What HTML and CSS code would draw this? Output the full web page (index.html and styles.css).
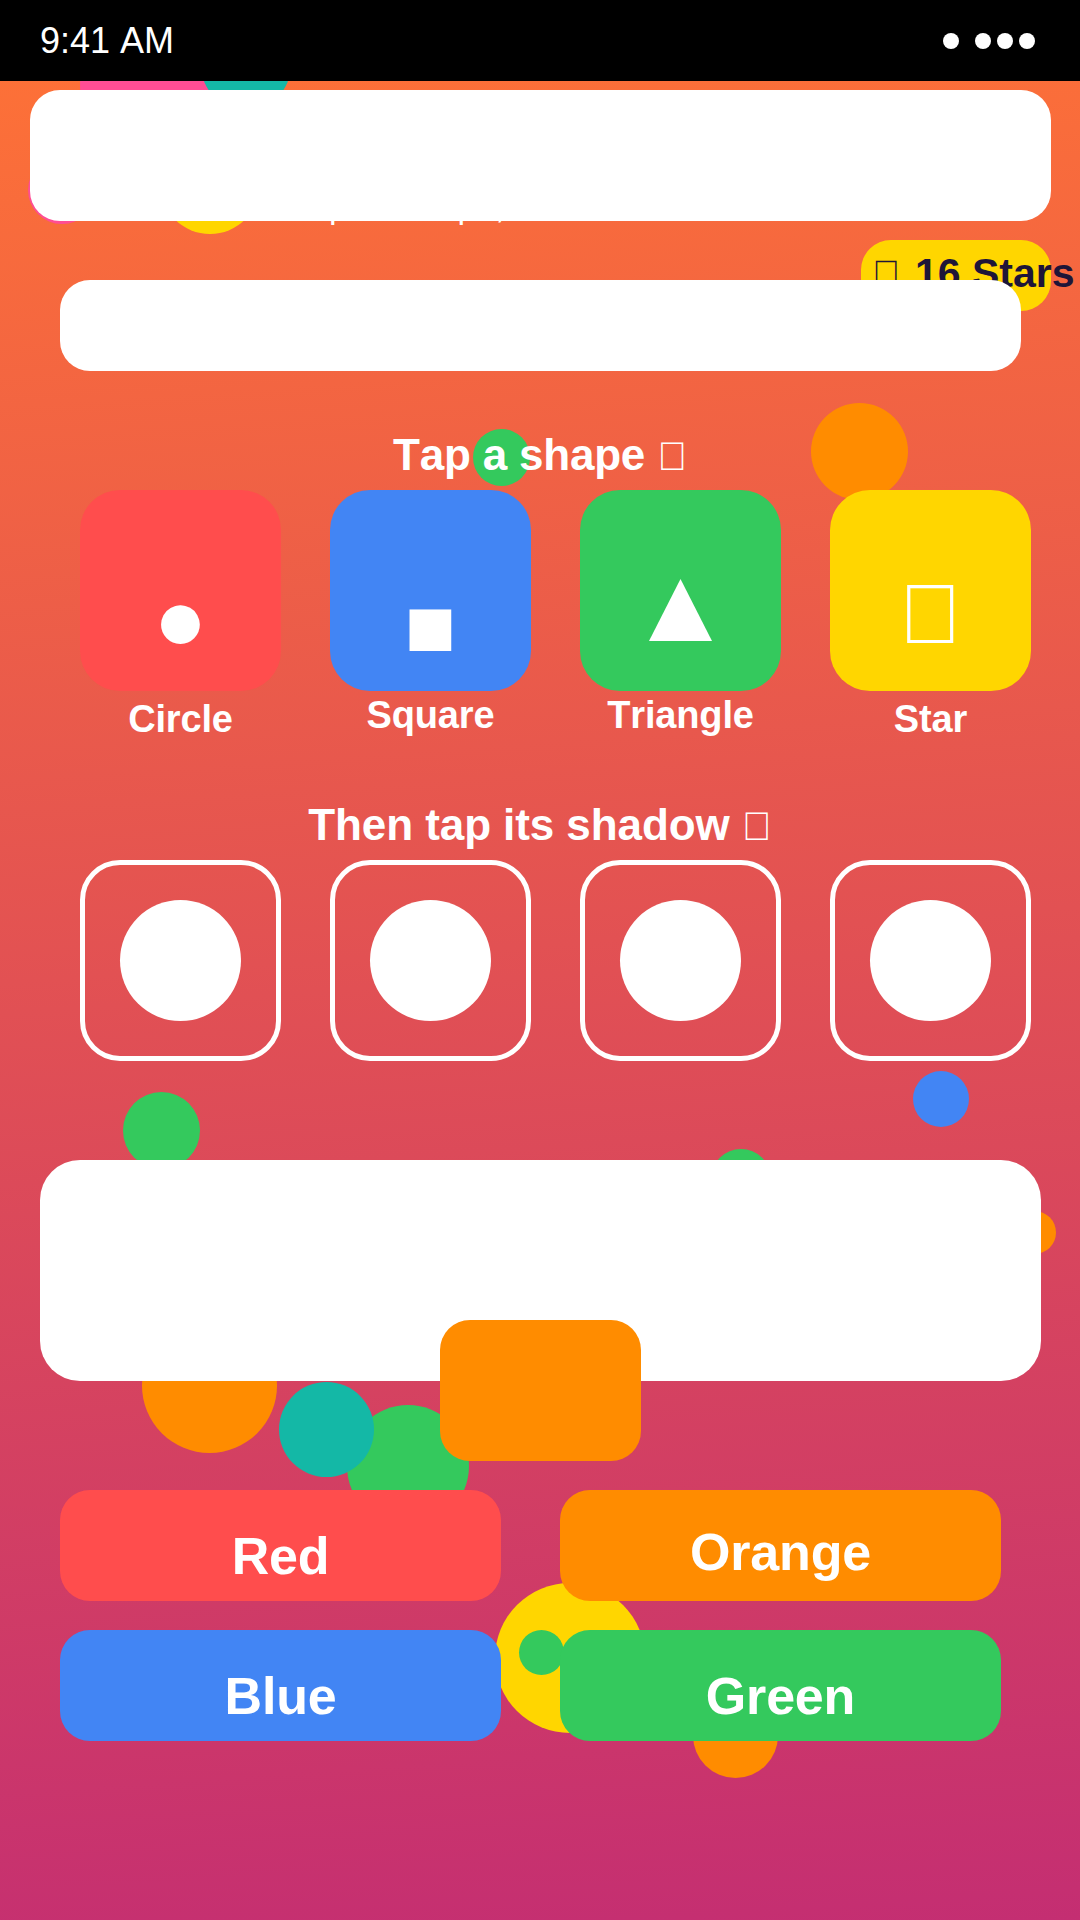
FILE: index.html
```html
<!DOCTYPE html>
<html lang="en">
<head>
<meta charset="utf-8">
<title>Shapes and Shadows</title>
<link rel="stylesheet" href="styles.css">
</head>
<body>
<div class="bubbles">
  <span class="bubble pink b1"></span>
  <span class="bubble pink b2"></span>
  <span class="bubble teal b3"></span>
  <span class="bubble yellow b4"></span>
  <span class="bubble green b5"></span>
  <span class="bubble orange b6"></span>
  <span class="bubble green b7"></span>
  <span class="bubble blue b8"></span>
  <span class="bubble green b9"></span>
  <span class="bubble orange b10"></span>
  <span class="bubble orange b11"></span>
  <span class="bubble green b12"></span>
  <span class="bubble teal b13"></span>
  <span class="bubble yellow b14"></span>
  <span class="bubble orange b15"></span>
  <span class="bubble green b16"></span>
</div>
<header class="status">
  <span class="time">9:41 AM</span>
  <span class="signal">
    <i class="dot dot-first"></i><i class="dot"></i><i class="dot"></i><i class="dot"></i>
  </span>
</header>
<main class="screen">
  <p class="subtitle">plan shape,</p>
  <div class="card card-title"></div>
  <div class="stars"><span class="tofu tofu-pill">&#xE000;</span> 16 Stars</div>
  <div class="card card-bar"></div>
  <h2 class="heading">Tap a shape <span class="tofu">&#xE000;</span></h2>
  <div class="shape-row">
    <div class="shape-col">
      <div class="tile red"><span class="glyph g-circle">●</span></div>
      <div class="label label-low">Circle</div>
    </div>
    <div class="shape-col">
      <div class="tile blue"><span class="glyph g-square">■</span></div>
      <div class="label">Square</div>
    </div>
    <div class="shape-col">
      <div class="tile green">
        <svg class="g-triangle" width="63" height="62" viewBox="0 0 63 62"><polygon points="31.5,0 63,62 0,62" fill="#fff"/></svg>
      </div>
      <div class="label">Triangle</div>
    </div>
    <div class="shape-col">
      <div class="tile yellow"><span class="glyph g-star">&#xE000;</span></div>
      <div class="label label-low">Star</div>
    </div>
  </div>
  <h2 class="heading heading-second">Then tap its shadow <span class="tofu">&#xE000;</span></h2>
  <div class="shadow-row">
    <div class="shadow"><span class="disc"></span></div>
    <div class="shadow"><span class="disc"></span></div>
    <div class="shadow"><span class="disc"></span></div>
    <div class="shadow"><span class="disc"></span></div>
  </div>
  <div class="card card-big"></div>
  <div class="swatch"></div>
  <div class="answers">
    <button class="answer red a-red">Red</button>
    <button class="answer orange a-orange">Orange</button>
    <button class="answer blue a-blue">Blue</button>
    <button class="answer green a-green">Green</button>
  </div>
</main>
</body>
</html>
```
FILE: styles.css
```css
* { box-sizing: border-box; }
html, body { margin: 0; padding: 0; }
body {
  position: relative;
  width: 1080px;
  height: 1920px;
  overflow: hidden;
  font-family: "Liberation Sans", Arial, sans-serif;
  font-kerning: none;
  color: #fff;
  background: linear-gradient(176deg, #ff7335 0%, #c42e72 100%);
}
.red { background: #ff4d4d; }
.blue { background: #4285f4; }
.green { background: #34c95d; }
.yellow { background: #ffd600; }
.orange { background: #ff8c00; }
.teal { background: #14b8a6; }
.pink { background: #ff4d94; }

.bubbles { position: absolute; inset: 0; }
.bubble { position: absolute; border-radius: 50%; }
.b1 { left: 80px; top: 15px; width: 140px; height: 140px; }
.b2 { left: 28px; top: 156px; width: 68px; height: 68px; }
.b3 { left: 201px; top: 20px; width: 90px; height: 90px; }
.b4 { left: 160px; top: 134px; width: 100px; height: 100px; }
.b5 { left: 473px; top: 429px; width: 57px; height: 57px; }
.b6 { left: 811px; top: 403px; width: 97px; height: 97px; }
.b7 { left: 123px; top: 1092px; width: 77px; height: 77px; }
.b8 { left: 913px; top: 1071px; width: 56px; height: 56px; }
.b9 { left: 711px; top: 1149px; width: 60px; height: 60px; }
.b10 { left: 1013px; top: 1211px; width: 43px; height: 43px; }
.b11 { left: 142px; top: 1318px; width: 135px; height: 135px; }
.b12 { left: 347px; top: 1405px; width: 122px; height: 122px; }
.b13 { left: 279px; top: 1382px; width: 95px; height: 95px; }
.b14 { left: 495px; top: 1583px; width: 150px; height: 150px; }
.b15 { left: 693px; top: 1693px; width: 85px; height: 85px; }
.b16 { left: 519px; top: 1630px; width: 45px; height: 45px; }

.status {
  position: relative;
  display: flex;
  align-items: center;
  justify-content: space-between;
  height: 81px;
  padding: 0 45px 0 40px;
  background: #000;
  font-size: 36px;
}
.signal { display: flex; gap: 6px; }
.dot { width: 16px; height: 16px; border-radius: 50%; background: #fff; }
.dot-first { margin-right: 10px; }

.screen { position: relative; display: flex; flex-direction: column; }
.subtitle {
  position: absolute;
  left: 329px;
  top: 106px;
  margin: 0;
  font-size: 34px;
  line-height: 38px;
  white-space: nowrap;
}
.card { position: relative; background: #fff; }
.card-title { width: 1021px; height: 131px; margin: 9px 0 0 30px; border-radius: 30px; }
.tofu { font-size: 40px; font-weight: 400; line-height: 0; }
.tofu-pill { font-size: 38px; margin-right: 3px; }
.stars {
  position: absolute;
  left: 861px;
  top: 159px;
  width: 190px;
  height: 71px;
  padding: 10px 0 0 11px;
  border-radius: 30px;
  background: #ffd600;
  color: #1e1538;
  font-size: 41px;
  font-weight: 700;
  line-height: 46px;
  white-space: nowrap;
}
.card-bar { width: 961px; height: 91px; margin: 59px 0 0 60px; border-radius: 30px; }
.heading {
  position: relative;
  margin: 59px 0 10px;
  font-size: 44px;
  font-weight: 700;
  letter-spacing: -0.2px;
  line-height: 50px;
  text-align: center;
}
.heading-second { margin: 59px 0 10px; letter-spacing: -0.08px; }

.shape-row, .shadow-row {
  position: relative;
  display: flex;
  gap: 49px;
  padding-left: 80px;
}
.shape-col { width: 201px; height: 251px; }
.tile {
  display: flex;
  justify-content: center;
  align-items: center;
  height: 201px;
  border-radius: 40px;
}
.glyph { font-size: 90px; line-height: 100px; }
.g-circle { padding-top: 56px; }
.g-square { padding-top: 70px; font-size: 86px; }
.g-triangle { margin-top: 39px; }
.g-star { padding-top: 47px; font-size: 84px; }
.label {
  margin-top: 2px;
  font-size: 38px;
  font-weight: 700;
  letter-spacing: -0.15px;
  line-height: 44px;
  text-align: center;
}
.label-low { margin-top: 6px; }
.shadow {
  display: flex;
  justify-content: center;
  align-items: center;
  width: 201px;
  height: 201px;
  border: 5px solid #fff;
  border-radius: 40px;
}
.disc { width: 121px; height: 121px; border-radius: 50%; background: #fff; }
.card-big { width: 1001px; height: 221px; margin: 99px 0 0 40px; border-radius: 40px; }
.swatch {
  position: relative;
  width: 201px;
  height: 141px;
  margin: -61px 0 0 440px;
  border-radius: 30px;
  background: #ff8c00;
}
.answers {
  position: relative;
  display: grid;
  grid-template-columns: 441px 441px;
  gap: 29px 59px;
  margin: 29px 0 0 60px;
}
.answer {
  height: 111px;
  padding: 0;
  border: 0;
  border-radius: 30px;
  color: #fff;
  font-family: inherit;
  font-size: 52px;
  font-weight: 700;
  letter-spacing: -0.2px;
}
.a-red { padding-top: 21px; }
.a-orange { padding-top: 12px; }
.a-blue { padding-top: 21px; }
.a-green { padding-top: 20px; }
```
